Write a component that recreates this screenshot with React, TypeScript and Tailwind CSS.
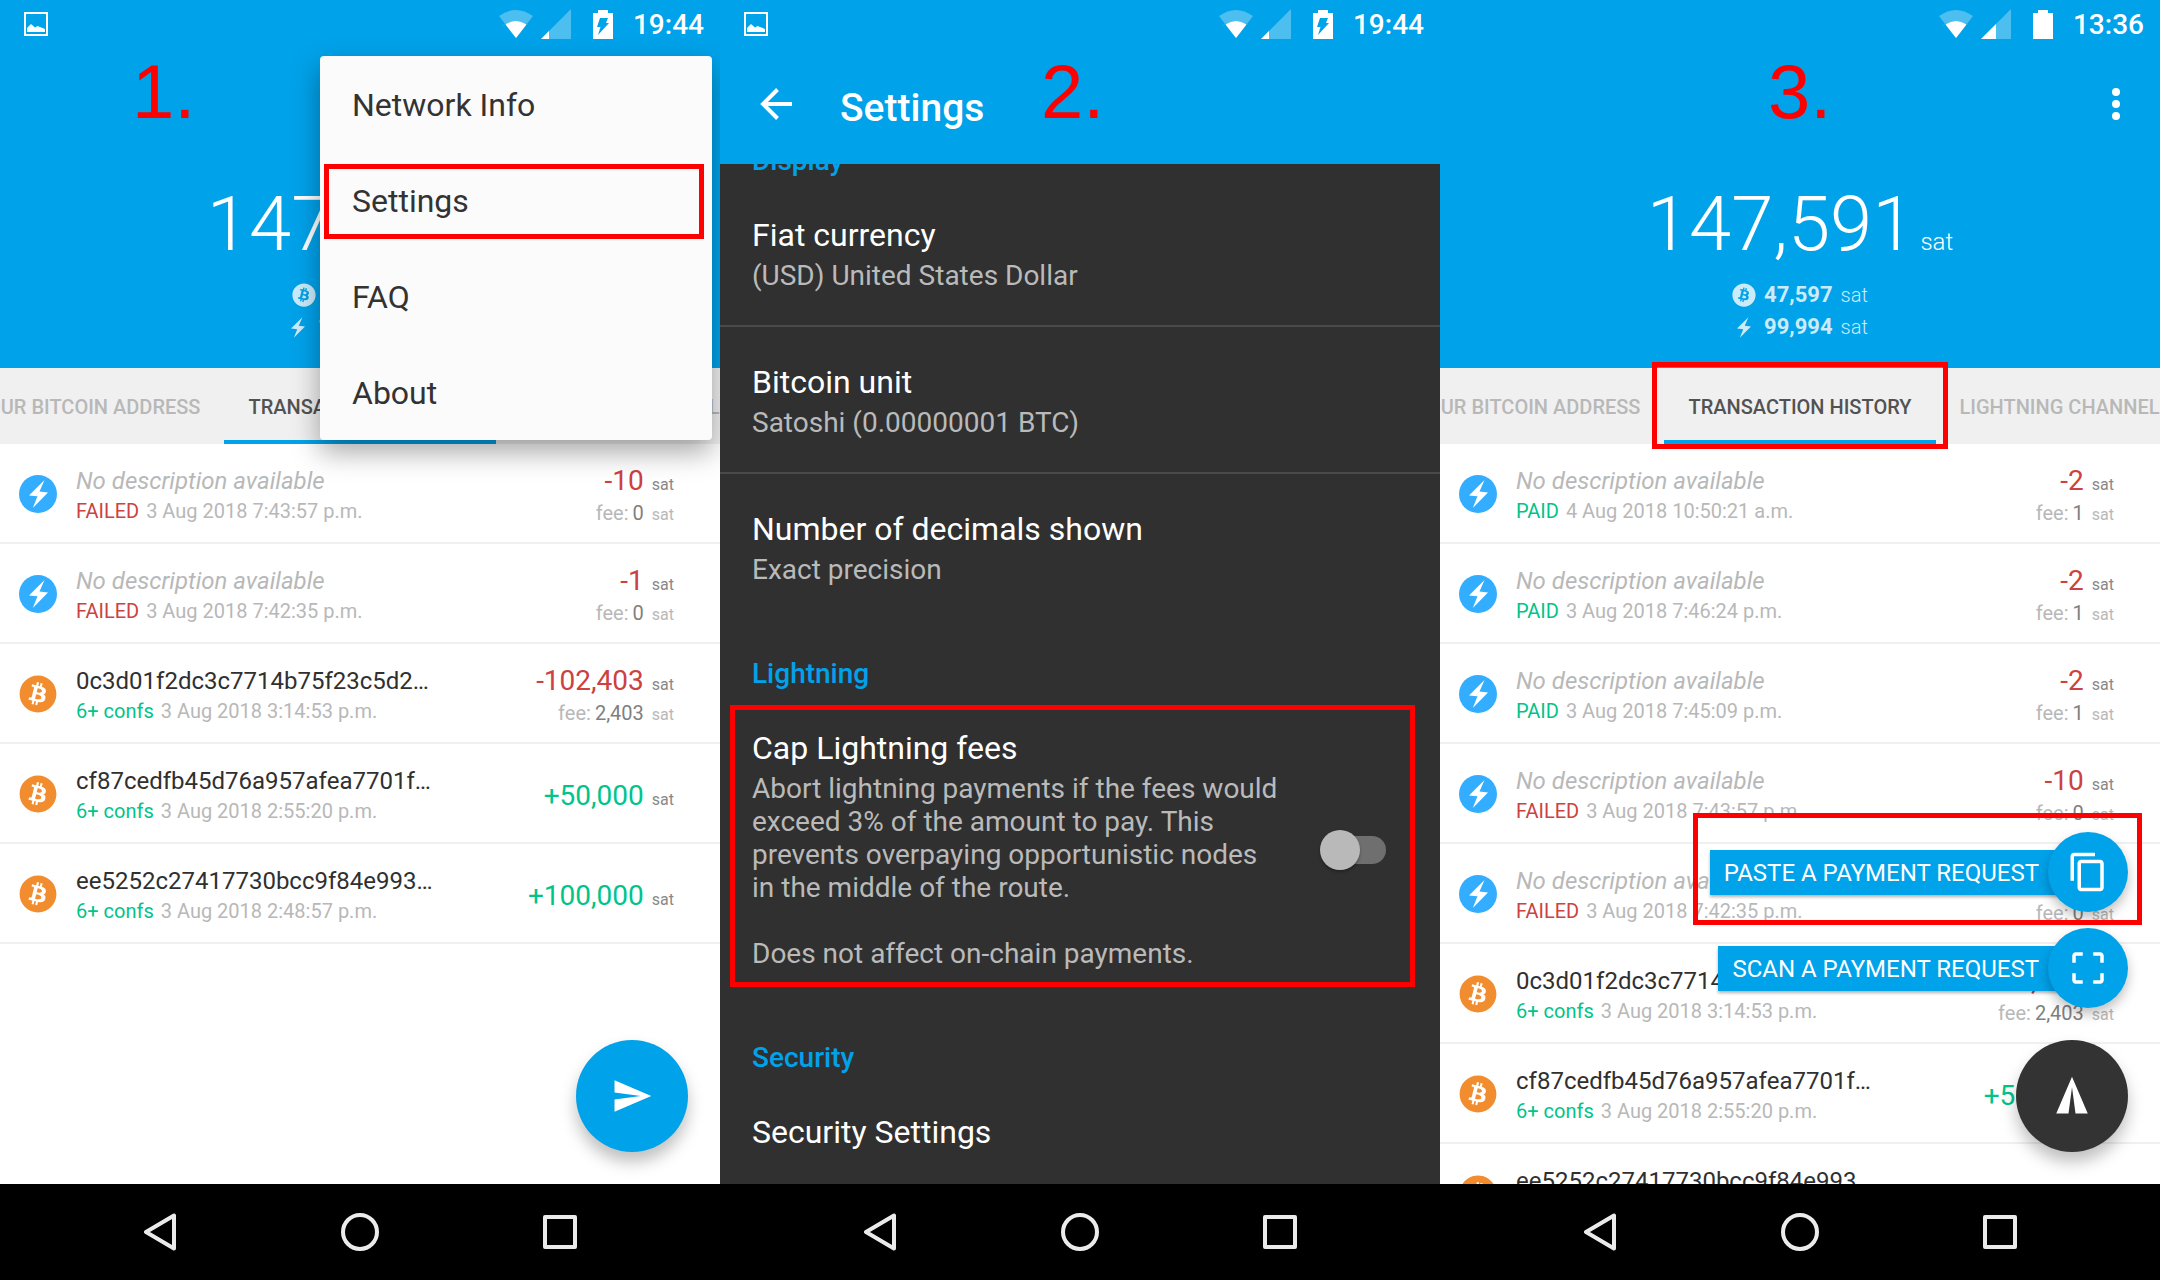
import { useState } from "react";
import type { ReactNode } from "react";
import { FaBitcoin } from "react-icons/fa";
import { MdContentCopy, MdCropFree, MdSend } from "react-icons/md";

type Tx = {
  kind: "ln" | "btc";
  title?: string;
  status: string;
  date: string;
  amount: string;
  fee?: string;
};

const onchain: Tx[] = [
  { kind: "btc", title: "0c3d01f2dc3c7714b75f23c5d2…", status: "6+ confs", date: "3 Aug 2018 3:14:53 p.m.", amount: "-102,403", fee: "2,403" },
  { kind: "btc", title: "cf87cedfb45d76a957afea7701f…", status: "6+ confs", date: "3 Aug 2018 2:55:20 p.m.", amount: "+50,000" },
  { kind: "btc", title: "ee5252c27417730bcc9f84e993…", status: "6+ confs", date: "3 Aug 2018 2:48:57 p.m.", amount: "+100,000" },
];

const failed: Tx[] = [
  { kind: "ln", status: "FAILED", date: "3 Aug 2018 7:43:57 p.m.", amount: "-10", fee: "0" },
  { kind: "ln", status: "FAILED", date: "3 Aug 2018 7:42:35 p.m.", amount: "-1", fee: "0" },
];

const paid: Tx[] = [
  { kind: "ln", status: "PAID", date: "4 Aug 2018 10:50:21 a.m.", amount: "-2", fee: "1" },
  { kind: "ln", status: "PAID", date: "3 Aug 2018 7:46:24 p.m.", amount: "-2", fee: "1" },
  { kind: "ln", status: "PAID", date: "3 Aug 2018 7:45:09 p.m.", amount: "-2", fee: "1" },
];

const firstHistory = [...failed, ...onchain];
const secondHistory = [...paid, ...failed, ...onchain];

function Bolt({ className }: { className: string }) {
  return (
    <svg viewBox="0 0 19 28" className={className} fill="currentColor" aria-hidden="true">
      <path d="M15.500 0 0 15.500l8.500.8L3.800 28 19 12.500l-8.500-1z" />
    </svg>
  );
}

function StatusBar({ time, charging, picture, bars }: { time: string; charging: boolean; picture: boolean; bars: number }) {
  return (
    <div className="flex h-12 shrink-0 items-center px-4 text-white">
      {picture && (
        <svg viewBox="0 0 24 24" className="ml-2 size-6" aria-hidden="true">
          <rect x="1" y="1" width="22" height="22" fill="none" stroke="currentColor" strokeWidth="2" />
          <path d="M3 20v-4l4-4 4 3.500 2.500-1.500L21 17v3z" fill="currentColor" />
        </svg>
      )}
      <svg viewBox="0 0 34 28" className="ml-auto h-7 w-[34px]" fill="currentColor" aria-hidden="true">
        <path d="M17 28 0 6Q17-6 34 6z" opacity=".3" />
        <path d="M17 28 6.500 14.500Q17 7.500 27.500 14.500z" />
      </svg>
      <svg viewBox="0 0 30 30" className="ml-2 size-[30px]" fill="currentColor" aria-hidden="true">
        <path d="M30 0v30H0z" opacity=".3" />
        <path d={`M0 30L${bars} ${30 - bars}V30z`} />
      </svg>
      <svg viewBox="0 0 20 29" className="ml-[22px] h-[29px] w-5" aria-hidden="true">
        <path d="M0 3h5V0h10v3h5v26H0z" fill="currentColor" />
        {charging && <path d="M7 8h8l-2 5h3L5 25l2.500-8H4z" fill="#00a2ea" />}
      </svg>
      <span className="ml-5 pt-0.5 text-[28px] leading-8 font-medium">{time}</span>
    </div>
  );
}

function NavBar() {
  return (
    <nav className="grid h-24 shrink-0 grid-cols-3 bg-black px-[60px] text-[#ebebeb]">
      <button aria-label="Back" className="flex items-center justify-center">
        <svg viewBox="0 0 38 38" className="size-[38px]" fill="none" stroke="currentColor" strokeWidth="4" strokeLinejoin="round">
          <path d="M33 2.500v33L5 19z" />
        </svg>
      </button>
      <button aria-label="Home" className="flex items-center justify-center">
        <svg viewBox="0 0 38 38" className="size-[38px]" fill="none" stroke="currentColor" strokeWidth="4">
          <circle cx="19" cy="19" r="17" />
        </svg>
      </button>
      <button aria-label="Recents" className="flex items-center justify-center">
        <svg viewBox="0 0 34 34" className="size-[34px]" fill="none" stroke="currentColor" strokeWidth="4" strokeLinejoin="round">
          <path d="M2 2h30v30H2z" />
        </svg>
      </button>
    </nav>
  );
}

function Step({ children, className }: { children: ReactNode; className: string }) {
  return (
    <span className={`absolute top-[54px] z-20 font-['Liberation_Sans',Arial,sans-serif] text-[76px] leading-[76px] text-[#ff0000] ${className}`}>
      {children}
    </span>
  );
}

function Balance({ lightning }: { lightning: string }) {
  return (
    <div className="flex h-80 flex-col items-center pt-[130px] text-white">
      <div className="flex items-baseline gap-1.5 font-light">
        <span className="text-[76px] leading-[92px]">147,591</span>
        <span className="text-2xl">sat</span>
      </div>
      <div className="mt-[9px] flex h-8 items-center text-[#cbebfa]">
        <FaBitcoin className="size-6" />
        <span className="ml-2 text-[22px] leading-8 font-bold">47,597</span>
        <span className="ml-2 text-xl leading-8 font-light">sat</span>
      </div>
      <div className="flex h-8 items-center text-[#cbebfa]">
        <div className="flex w-6 justify-center">
          <Bolt className="h-[21px] w-[14px]" />
        </div>
        <span className="ml-2 text-[22px] leading-8 font-bold">{lightning}</span>
        <span className="ml-2 text-xl leading-8 font-light">sat</span>
      </div>
    </div>
  );
}

function Tabs({ marked }: { marked?: boolean }) {
  return (
    <div className="grid h-[76px] shrink-0 grid-cols-[minmax(0,1fr)_auto_minmax(0,1fr)] bg-[#f0f0f0] text-xl font-medium whitespace-nowrap text-[#b8b8b8]">
      <button className="flex items-center justify-end overflow-hidden px-6 pt-0.5">YOUR BITCOIN ADDRESS</button>
      <button className="relative border-b-4 border-[#00a2ea] px-6 pt-1.5 text-[#525252]">
        TRANSACTION HISTORY
        {marked && <span className="absolute -inset-x-3 -top-1.5 -bottom-[9px] z-20 border-5 border-[#ff0000]" />}
      </button>
      <button className="flex items-center overflow-hidden px-6 pt-0.5">LIGHTNING CHANNELS</button>
    </div>
  );
}

function TxRow({ tx }: { tx: Tx }) {
  const good = tx.status !== "FAILED";
  return (
    <li className="flex h-[100px] shrink-0 items-center border-b-2 border-[#f0f0f0] pt-0.5 pr-[46px] pl-[19px]">
      {tx.kind === "ln" ? (
        <div className="flex size-[38px] shrink-0 items-center justify-center rounded-full bg-[#33adff] text-white">
          <Bolt className="h-7 w-[19px]" />
        </div>
      ) : (
        <FaBitcoin className="size-[38px] shrink-0 text-[#f28d2f]" />
      )}
      <div className="ml-[19px] pt-0.5 whitespace-nowrap">
        {tx.title ? (
          <p className="text-2xl leading-8 text-[#303030]">{tx.title}</p>
        ) : (
          <p className="text-2xl leading-8 text-[#b8b8b8] italic">No description available</p>
        )}
        <p className="flex gap-[7px] text-xl leading-7 text-[#b8b8b8]">
          <span className={good ? "text-[#00c48a]" : "text-[#cc4141]"}>{tx.status}</span>
          {tx.date}
        </p>
      </div>
      <div className="ml-auto flex flex-col items-end pt-1.5 whitespace-nowrap">
        <p className="flex items-baseline gap-2">
          <span className={`text-[28px] leading-8 ${tx.amount.startsWith("+") ? "text-[#00c48a]" : "text-[#cc4141]"}`}>{tx.amount}</span>
          <span className="text-base leading-7 text-[#888888]">sat</span>
        </p>
        {tx.fee && (
          <p className="flex items-baseline text-xl leading-7 text-[#b8b8b8]">
            fee:
            <span className="ml-1 text-[#808080]">{tx.fee}</span>
            <span className="ml-2 text-base leading-7">sat</span>
          </p>
        )}
      </div>
    </li>
  );
}

function MenuScreen() {
  return (
    <section className="relative flex h-full min-w-0 flex-col overflow-hidden bg-white">
      <div className="shrink-0 bg-[#00a2ea]">
        <StatusBar time="19:44" charging picture bars={8} />
        <Balance lightning="100,000" />
      </div>
      <Tabs />
      <ul className="min-h-0 flex-1 overflow-hidden">
        {firstHistory.map((tx, i) => (
          <TxRow key={i} tx={tx} />
        ))}
      </ul>
      <NavBar />

      <Step className="left-[132px]">1.</Step>
      <div className="absolute top-14 right-2 z-10 flex w-[392px] flex-col rounded bg-[#fbfbfb] shadow-[0_12px_28px_rgba(0,0,0,0.35)]">
        {["Network Info", "Settings", "FAQ", "About"].map((label) => (
          <button key={label} className="relative h-24 pt-0.5 pl-8 text-left text-[32px] text-[#333333]">
            {label}
            {label === "Settings" && <span className="absolute top-3 right-2 bottom-[9px] left-1 border-5 border-[#ff0000]" />}
          </button>
        ))}
      </div>
      <button aria-label="Send" className="absolute right-8 bottom-32 flex size-28 items-center justify-center rounded-full bg-[#00a2ea] text-white shadow-[0_10px_16px_rgba(0,0,0,0.25)]">
        <MdSend className="size-[42px]" />
      </button>
    </section>
  );
}

function Category({ children }: { children: ReactNode }) {
  return <h2 className="px-8 pt-[38px] pb-[3px] text-[28px] leading-[33px] font-medium text-[#00a2ea]">{children}</h2>;
}

function Setting({ title, children, divided }: { title: string; children?: ReactNode; divided?: boolean }) {
  return (
    <div className={`px-8 pt-9 pb-[33px] ${divided ? "border-b-2 border-[#4a4a4a]" : ""}`}>
      <h3 className="text-[32px] leading-[38px] text-white">{title}</h3>
      {children && <p className="mt-[5px] text-[28px] leading-[33px] text-[#bababa]">{children}</p>}
    </div>
  );
}

function SettingsScreen() {
  const [capFees, setCapFees] = useState(false);

  return (
    <section className="relative flex h-full min-w-0 flex-col overflow-hidden bg-[#303030]">
      <header className="z-10 shrink-0 bg-[#00a2ea] text-white">
        <StatusBar time="19:44" charging picture bars={8} />
        <div className="flex h-[116px] items-center pb-1 pl-10">
          <button aria-label="Back">
            <svg viewBox="0 0 32 32" className="size-8" fill="none" stroke="currentColor" strokeWidth="4">
              <path d="M32 16H3M17.500 1.500 3 16l14.500 14.500" />
            </svg>
          </button>
          <h1 className="mt-2 ml-12 text-[39px] leading-[48px] font-medium">Settings</h1>
        </div>
      </header>
      <div className="min-h-0 flex-1 overflow-hidden">
        <div className="-mt-[58px]">
          <Category>Display</Category>
          <Setting title="Fiat currency" divided>(USD) United States Dollar</Setting>
          <Setting title="Bitcoin unit" divided>Satoshi (0.00000001 BTC)</Setting>
          <Setting title="Number of decimals shown">Exact precision</Setting>
          <Category>Lightning</Category>
          <label className="relative flex items-center pt-9 pr-[54px] pb-[33px] pl-8">
            <span className="block flex-1">
              <span className="block text-[32px] leading-[38px] text-white">Cap Lightning fees</span>
              <span className="mt-[5px] block text-[28px] leading-[33px] text-[#bababa]">
                Abort lightning payments if the fees would exceed 3% of the amount to pay. This prevents overpaying opportunistic nodes in the middle of the route.
                <br />
                <br />
                Does not affect on-chain payments.
              </span>
            </span>
            <span className="relative ml-10 flex h-10 w-[66px] shrink-0 items-center">
              <input type="checkbox" className="peer sr-only" checked={capFees} onChange={(e) => setCapFees(e.target.checked)} />
              <span className="ml-3 h-7 flex-1 rounded-full bg-[#6f6f6f]" />
              <span className="absolute left-0 size-10 rounded-full bg-[#b9b9b9] shadow-[0_2px_3px_rgba(0,0,0,0.3)] peer-checked:left-[26px] peer-checked:bg-[#00a2ea]" />
            </span>
            <span className="absolute top-3 right-[25px] bottom-4 left-2.5 border-5 border-[#ff0000]" />
          </label>
          <Category>Security</Category>
          <Setting title="Security Settings" />
        </div>
      </div>
      <NavBar />
      <Step className="left-[321px]">2.</Step>
    </section>
  );
}

function PayAction({ label, icon }: { label: string; icon: ReactNode }) {
  return (
    <button className="flex items-center text-white">
      <span className="-mr-10 bg-[#00a2ea] pt-[7px] pr-[49px] pb-[5px] pl-3.5 text-2xl leading-[33px] shadow-[0_2px_3px_rgba(0,0,0,0.3)]">{label}</span>
      <span className="relative flex size-20 items-center justify-center rounded-full bg-[#00a2ea] shadow-[0_6px_12px_rgba(0,0,0,0.25)]">{icon}</span>
    </button>
  );
}

function PayScreen() {
  return (
    <section className="relative flex h-full min-w-0 flex-col overflow-hidden bg-white">
      <div className="shrink-0 bg-[#00a2ea]">
        <StatusBar time="13:36" charging={false} picture={false} bars={15} />
        <Balance lightning="99,994" />
      </div>
      <Tabs marked />
      <ul className="min-h-0 flex-1 overflow-hidden">
        {secondHistory.map((tx, i) => (
          <TxRow key={i} tx={tx} />
        ))}
      </ul>
      <NavBar />

      <Step className="left-[328px]">3.</Step>
      <button aria-label="More options" className="absolute top-20 right-8 flex h-12 w-6 flex-col items-center justify-center gap-1">
        <span className="size-2 rounded-full bg-white" />
        <span className="size-2 rounded-full bg-white" />
        <span className="size-2 rounded-full bg-white" />
      </button>
      <div className="absolute right-8 bottom-32 flex flex-col items-end">
        <PayAction label="PASTE A PAYMENT REQUEST" icon={<MdContentCopy className="size-[42px]" />} />
        <div className="mt-4 mb-8">
          <PayAction label="SCAN A PAYMENT REQUEST" icon={<MdCropFree className="size-[42px]" />} />
        </div>
        <button aria-label="Close" className="flex size-28 items-center justify-center rounded-full bg-[#333333] text-white shadow-[0_10px_16px_rgba(0,0,0,0.25)]">
          <MdSend className="size-[42px] -rotate-90" />
        </button>
        <span className="absolute -top-[19px] -right-[14px] h-28 w-[449px] border-5 border-[#ff0000]" />
      </div>
    </section>
  );
}

export default function App() {
  return (
    <main className="grid h-screen grid-cols-3 bg-black font-[Roboto,sans-serif]">
      <MenuScreen />
      <SettingsScreen />
      <PayScreen />
    </main>
  );
}
